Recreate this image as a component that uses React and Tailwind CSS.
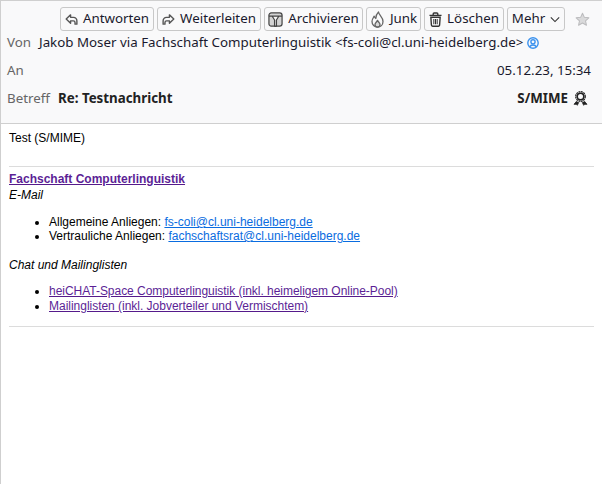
import React from 'react';

const ToolButton = ({ icon, label, width }) => (
  <button className={`flex h-[24px] items-center justify-center gap-[5px] rounded-[3px] border border-[#c8c8c8] bg-[#f9f9fa] text-[13.33px] text-[#1a1a2e] ${width}`}>
    {icon}
    <span>{label}</span>
  </button>
);

const ReplyIcon = () => (
  <svg width="13" height="13" viewBox="0 0 14 14" fill="none" stroke="#555" strokeWidth="1.5" strokeLinejoin="round">
    <path d="M6 2 1.300 6.500 6 11V8.500h3c1 0 1.800.7 1.800 1.700v1.800h2V8.500c0-2.100-1.500-3.800-3.600-3.800H6z" />
  </svg>
);

const ForwardIcon = () => (
  <svg width="13" height="13" viewBox="0 0 14 14" fill="none" stroke="#555" strokeWidth="1.5" strokeLinejoin="round">
    <path d="M8 2 12.700 6.500 8 11V8.500H5c-1 0-1.800.7-1.800 1.700v1.800h-2V8.500c0-2.100 1.500-3.800 3.600-3.800H8z" />
  </svg>
);

const ArchiveIcon = () => (
  <svg width="15" height="15" viewBox="0 0 16 16" fill="none" stroke="#444" strokeWidth="1.300" strokeLinejoin="round">
    <rect x="1" y="1" width="14" height="14" rx="2.500" fill="#d4d4d4" />
    <path d="M1 4.500h14M4.500 4.500 7 8.500v6.500h2V8.500l2.500-4z" fill="#f6f6f6" />
  </svg>
);

const JunkIcon = () => (
  <svg width="15" height="17" viewBox="0 0 15 17" fill="none" stroke="#666" strokeWidth="1.300" strokeLinejoin="round">
    <path d="M8.500 1c0 2.500 4.500 5 4.500 9.500 0 3.200-2.400 5.500-5.500 5.500S2 13.700 2 10.500c0-2.300 1.300-3.800 2.200-5.300.3 1.100.8 1.800 1.600 2.300C5.800 5 6.800 2.700 8.500 1z" />
    <path d="M7.500 16c-1.500 0-2.500-1.100-2.500-2.500 0-1.500 1.600-2.300 2.500-4.100.9 1.800 2.500 2.600 2.500 4.100 0 1.400-1 2.500-2.500 2.500z" fill="#d8d8d8" />
  </svg>
);

const TrashIcon = () => (
  <svg width="13" height="15" viewBox="0 0 14 16" fill="none" stroke="#333" strokeWidth="1.500">
    <path d="M.5 3.500h13M4.500 3.500V2a1 1 0 0 1 1-1h3a1 1 0 0 1 1 1v1.500" />
    <path d="M2 5.500 2.600 14a1.200 1.200 0 0 0 1.200 1.200h6.400a1.200 1.200 0 0 0 1.200-1.200l.6-8.500z" />
    <path d="M5.200 7.500v5.500M7 7.500v5.500M8.800 7.500v5.500" strokeWidth="1.100" />
  </svg>
);

const Chevron = () => (
  <svg width="10" height="7" viewBox="0 0 12 8" fill="none" stroke="#333" strokeWidth="1.300">
    <path d="M1 1.500 6 6.500 11 1.500" />
  </svg>
);

const Star = () => (
  <svg width="15" height="15" viewBox="0 0 16 16" fill="#dadadb" stroke="#bcbcbe" strokeWidth="1.100" strokeLinejoin="round">
    <path d="M8 1.300 10 5.700l4.800.5-3.600 3.200 1 4.700L8 11.700l-4.200 2.400 1-4.700L1.200 6.200 6 5.700z" />
  </svg>
);

const ContactIcon = () => (
  <svg width="12" height="12" viewBox="0 0 12 12" fill="none" stroke="#3b92ee" strokeWidth="1.400">
    <circle cx="6" cy="6" r="5.200" />
    <circle cx="6" cy="4.800" r="2.100" />
    <path d="M2.600 10C3.300 8.500 4.500 8 6 8s2.700.5 3.400 2" />
  </svg>
);

const SmimeIcon = () => (
  <svg width="15" height="15" viewBox="0 0 15 15" fill="none" stroke="#222">
    <circle cx="7.500" cy="5.500" r="3.300" strokeWidth="1.600" />
    <circle cx="7.500" cy="5.500" r="4.800" strokeWidth="1.200" strokeDasharray="1.900 0.600" />
    <path d="M3.600 10.200 1 13.300h2.300l1 1 1.500-3M11.400 10.200 14 13.300h-2.300l-1 1-1.500-3" strokeWidth=".8" fill="#222" />
  </svg>
);

const linkClass = 'text-[#0a6ce0] underline';
const visitedClass = 'text-[#5c1f96] underline decoration-[#551a8b]';

export default function App() {
  return (
    <div className="flex h-[484px] w-[602px] flex-col overflow-hidden border-t border-l border-[#cfcfcf] bg-white font-['Noto_Sans',sans-serif]">
      <header className="h-[123px] shrink-0 border-b border-[#cfcfcf] bg-[#f9f9fa]">
        <div className="flex h-[30px] items-end pl-[59px]">
          <div className="flex gap-[3px]">
            <ToolButton icon={<ReplyIcon />} label="Antworten" width="w-[94px]" />
            <ToolButton icon={<ForwardIcon />} label="Weiterleiten" width="w-[104px]" />
            <ToolButton icon={<ArchiveIcon />} label="Archivieren" width="w-[99px]" />
            <ToolButton icon={<JunkIcon />} label="Junk" width="w-[55px]" />
            <ToolButton icon={<TrashIcon />} label="Löschen" width="w-[80px]" />
            <ToolButton icon={<Chevron />} label="Mehr" width="w-[58px] flex-row-reverse" />
          </div>
          <div className="mb-[4px] ml-[10px]">
            <Star />
          </div>
        </div>
        <div className="mt-[2px] flex h-[20px] items-center pl-[6px] text-[13.33px] text-[#1a1a2e]">
          <span className="w-[32px] text-[#666]">Von</span>
          <span>Jakob Moser via Fachschaft Computerlinguistik &lt;fs-coli@cl.uni-heidelberg.de&gt;</span>
          <span className="ml-[4px]"><ContactIcon /></span>
        </div>
        <div className="mt-[8px] flex h-[20px] items-center justify-between pl-[6px] pr-[11px] text-[13.33px] text-[#1a1a2e]">
          <span className="text-[#666]">An</span>
          <span>05.12.23, 15:34</span>
        </div>
        <div className="mt-[8px] flex h-[20px] items-center justify-between pl-[6px] pr-[14px] text-[13.33px]">
          <div className="flex items-center">
            <span className="w-[51px] text-[#666]">Betreff</span>
            <span className="font-bold text-[#222]">Re: Testnachricht</span>
          </div>
          <div className="flex items-center gap-[5px] font-bold text-[#222]">
            <span>S/MIME</span>
            <SmimeIcon />
          </div>
        </div>
      </header>
      <main className="px-[8px] pt-[7px] font-['Liberation_Sans',sans-serif] text-[12px] leading-[14px] text-black">
        <p>Test (S/MIME)</p>
        <hr className="mt-[21px] border-[#dcdcdc]" />
        <p className="mt-[5px]">
          <a className={`font-bold ${visitedClass}`} href="#">Fachschaft Computerlinguistik</a>
        </p>
        <p className="mt-[2px] italic">E-Mail</p>
        <ul className="mt-[13px] list-disc pl-[40px]">
          <li className="h-[14px]">Allgemeine Anliegen: <a className={linkClass} href="#">fs-coli@cl.uni-heidelberg.de</a></li>
          <li className="h-[14px]">Vertrauliche Anliegen: <a className={linkClass} href="#">fachschaftsrat@cl.uni-heidelberg.de</a></li>
        </ul>
        <p className="mt-[15px] italic">Chat und Mailinglisten</p>
        <ul className="mt-[12px] list-disc pl-[40px]">
          <li className="h-[15px] tracking-[-0.03px]"><a className={visitedClass} href="#">heiCHAT-Space Computerlinguistik (inkl. heimeligem Online-Pool)</a></li>
          <li className="h-[15px] tracking-[-0.02px]"><a className={visitedClass} href="#">Mailinglisten (inkl. Jobverteiler und Vermischtem)</a></li>
        </ul>
        <hr className="mt-[12px] border-[#dcdcdc]" />
      </main>
    </div>
  );
}
